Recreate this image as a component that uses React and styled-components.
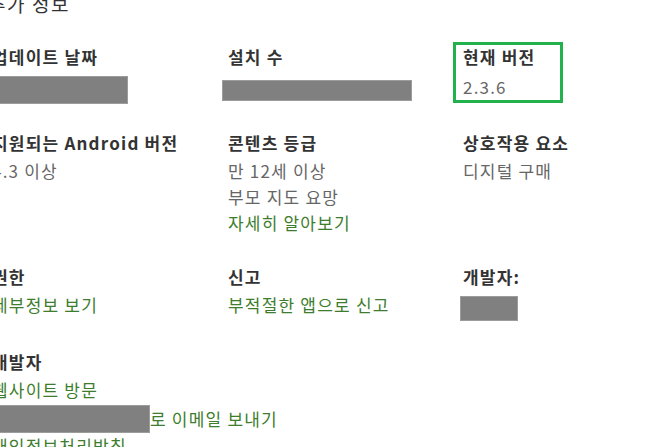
import React from "react";
import styled, { createGlobalStyle } from "styled-components";

const GlobalStyle = createGlobalStyle`
  html, body {
    margin: 0;
    padding: 0;
    background: #fff;
    overflow: hidden;
  }
  body {
    font-family: "Noto Sans CJK KR", "Noto Sans", sans-serif;
  }
`;

const Page = styled.div`
  width: 680px;
  margin-left: -8px;
  margin-top: -8px;
`;

const Title = styled.h2`
  margin: 0 0 0 -4px;
  font-size: 19px;
  letter-spacing: 1.6px;
  line-height: 24px;
  font-weight: 400;
  color: #333;
`;

const Grid = styled.div`
  display: grid;
  grid-template-columns: 236px 235px 235px;
  grid-template-rows: 86.5px 134px 85px auto;
  margin-top: 27.5px;
`;

const Item = styled.div`
  position: relative;
  font-size: 17px;
  letter-spacing: 1.2px;
  line-height: 26px;
  white-space: nowrap;
`;

const Highlight = styled(Item)`
  &::after {
    content: "";
    position: absolute;
    left: -10px;
    top: -1.5px;
    width: 104px;
    height: 55px;
    border: 3px solid #22b14c;
  }
`;

const Heading = styled.div`
  color: #333;
  font-weight: 700;
  margin-bottom: 2px;
`;

const Value = styled.div`
  color: #666;
  margin-top: ${(p) => p.$top || 0}px;
`;

const Link = styled.a`
  display: ${(p) => (p.$row ? "flex" : "block")};
  align-items: center;
  height: ${(p) => (p.$row ? "28px" : "auto")};
  margin-top: ${(p) => (p.$row ? "2px" : "0")};
  color: #3d7d2d;
  text-decoration: none;
  cursor: pointer;
`;

const Redacted = styled.span`
  display: ${(p) => (p.$inline ? "inline-block" : "block")};
  flex: none;
  width: ${(p) => p.$w}px;
  height: ${(p) => p.$h}px;
  margin-top: ${(p) => p.$top || 0}px;
  margin-left: ${(p) => p.$left || 0}px;
  background: #808080;
  border: 1px solid #9c9c9c;
  box-sizing: border-box;
`;

const App = () => (
  <Page>
    <GlobalStyle />
    <Title>추가 정보</Title>
    <Grid>
      <Item>
        <Heading>업데이트 날짜</Heading>
        <Redacted $w={136} $h={28} $top={6.5} $left={0} />
      </Item>
      <Item>
        <Heading>설치 수</Heading>
        <Redacted $w={190} $h={21} $top={10.5} $left={-6} />
      </Item>
      <Highlight>
        <Heading>현재 버전</Heading>
        <Value $top={4}>2.3.6</Value>
      </Highlight>

      <Item>
        <Heading>지원되는 Android 버전</Heading>
        <Value>4.3 이상</Value>
      </Item>
      <Item>
        <Heading>콘텐츠 등급</Heading>
        <Value>만 12세 이상</Value>
        <Value>부모 지도 요망</Value>
        <Link>자세히 알아보기</Link>
      </Item>
      <Item>
        <Heading>상호작용 요소</Heading>
        <Value>디지털 구매</Value>
      </Item>

      <Item>
        <Heading>권한</Heading>
        <Link>세부정보 보기</Link>
      </Item>
      <Item>
        <Heading>신고</Heading>
        <Link>부적절한 앱으로 신고</Link>
      </Item>
      <Item>
        <Heading>개발자:</Heading>
        <Redacted $w={58} $h={25} $top={6} $left={-3} />
      </Item>

      <Item>
        <Heading>개발자</Heading>
        <Link>웹사이트 방문</Link>
        <Link $row>
          <Redacted $inline $w={158} $h={28} />
          로 이메일 보내기
        </Link>
        <Link>개인정보처리방침</Link>
      </Item>
    </Grid>
  </Page>
);

export default App;
